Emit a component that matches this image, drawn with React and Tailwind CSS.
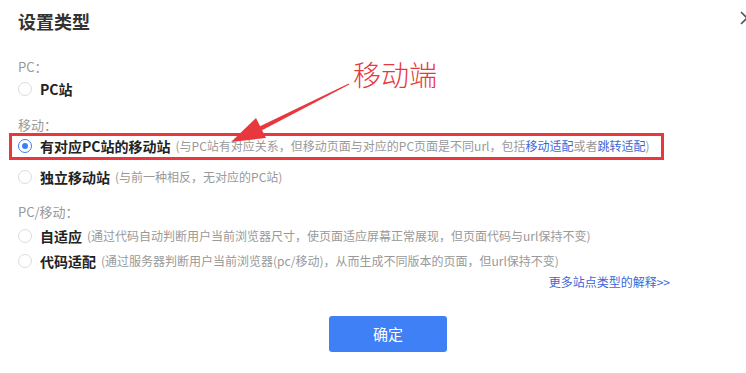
import React from 'react';

function Radio({ checked }) {
  return checked ? (
    <span className="w-[14px] h-[14px] rounded-full border border-[#3d7ef7] flex items-center justify-center shrink-0">
      <span className="w-[6px] h-[6px] rounded-full bg-[#3d7ef7]" />
    </span>
  ) : (
    <span className="w-[14px] h-[14px] rounded-full border border-[#dcdcdc] shrink-0" />
  );
}

function Option({ checked, label, children, className }) {
  return (
    <div className={`h-[20px] flex items-center ${className}`}>
      <Radio checked={checked} />
      <span className="ml-[8px] text-[14px] font-bold text-[#222] leading-[20px]">{label}</span>
      {children && <span className="ml-[5px] text-[12px] text-[#999] leading-[20px] whitespace-nowrap">{children}</span>}
    </div>
  );
}

export default function App() {
  return (
    <div className="relative w-[746px] h-[373px] bg-white overflow-hidden font-['Microsoft_YaHei','Noto_Sans_CJK_SC',sans-serif]">
      <div className="pl-[18px] pt-[9px]">
        <div className="h-[24px] flex items-center text-[18px] font-bold text-[#333]">设置类型</div>

        <div className="mt-[24px] h-[20px] flex items-center text-[13px] text-[#999]">PC：</div>
        <Option className="mt-[2px]" label="PC站" />

        <div className="mt-[16px] h-[20px] flex items-center text-[13px] text-[#999]">移动：</div>
        <Option className="mt-[1px]" checked label="有对应PC站的移动站">
          (与PC站有对应关系，但移动页面与对应的PC页面是不同url，包括
          <span className="text-[#3b67d8]">移动适配</span>或者<span className="text-[#3b67d8]">跳转适配</span>)
        </Option>
        <Option className="mt-[11px]" label="独立移动站">(与前一种相反，无对应的PC站)</Option>

        <div className="mt-[15px] h-[20px] flex items-center text-[13px] text-[#999]">PC/移动：</div>
        <Option className="mt-[4px]" label="自适应">
          (通过代码自动判断用户当前浏览器尺寸，使页面适应屏幕正常展现，但页面代码与url保持不变)
        </Option>
        <Option className="mt-[5px]" label="代码适配">
          (通过服务器判断用户当前浏览器(pc/移动)，从而生成不同版本的页面，但url保持不变)
        </Option>
      </div>

      <div className="mt-[1px] h-[20px] flex justify-end pr-[76px] items-center text-[12px] text-[#3b67d8]">
        更多站点类型的解释&gt;&gt;
      </div>

      <div className="mt-[24px] pl-[329px]">
        <button className="w-[118px] h-[36px] rounded-[3px] bg-[#3f80f6] text-white text-[15px]">确定</button>
      </div>

      {/* close button, cut at the edge */}
      <svg className="absolute left-[740px] top-[11px]" width="14" height="14" viewBox="0 0 14 14">
        <path d="M1 1 L13 13 M13 1 L1 13" stroke="#555" strokeWidth="1.6" fill="none" />
      </svg>

      {/* annotation */}
      <div className="absolute left-[9px] top-[133px] w-[655px] h-[27px] border-[3px] border-[#e8383d]" />
      <div className="absolute left-[353px] top-[56px] text-[28px] leading-[36px] font-light text-[#e8383d]">移动端</div>
      <svg className="absolute left-0 top-0" width="746" height="373">
        <polygon points="231,142 256,118 266,138" fill="#e8383d" />
        <polygon points="261.5,130.5 259.5,126.5 348.8,83.4 349.3,84.4" fill="#e8383d" />
      </svg>
    </div>
  );
}
